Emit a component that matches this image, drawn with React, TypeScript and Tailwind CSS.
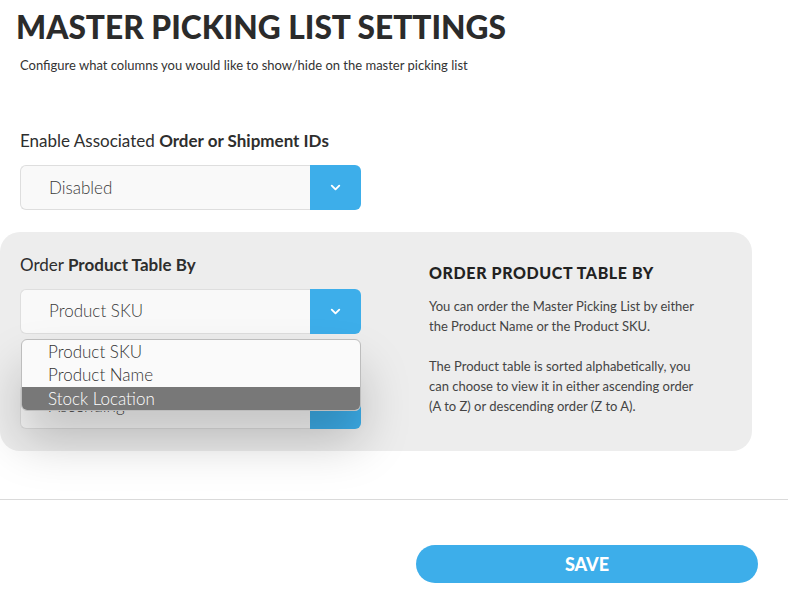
import React from 'react';
import { ChevronDown } from 'lucide-react';

const font = { fontFamily: 'Lato, "Liberation Sans", sans-serif' };

interface SelectProps {
  value: string;
}

// 青いボタン付きのセレクト
const SelectBox: React.FC<SelectProps> = ({ value }) => (
  <div className="flex h-[45px] w-[341px]">
    <div className="flex flex-1 items-center rounded-l-[6px] border border-r-0 border-[#dedede] bg-[#f9f9f9] pl-[28px] text-[17px] font-light text-[#3a3a3a]">
      {value}
    </div>
    <div className="flex w-[51px] items-center justify-center rounded-r-[6px] bg-[#3daeea]">
      <ChevronDown size={15} strokeWidth={3} className="text-white" />
    </div>
  </div>
);

const App: React.FC = () => {
  return (
    <div className="h-[605px] w-[788px] overflow-hidden bg-white text-[#2e2e2e]" style={font}>
      <div className="pl-[16px] pt-[5px]">
        <h1 className="text-[31.7px] leading-[44px] font-black text-[#2b2b2b]">
          MASTER PICKING LIST SETTINGS
        </h1>
        <p className="mt-[7px] pl-[4px] text-[13px] text-[#333]">
          Configure what columns you would like to show/hide on the master picking list
        </p>
      </div>

      <div className="mt-[52px] pl-[20px]">
        <div className="text-[17px] text-[#2e2e2e]">
          Enable Associated <span className="font-bold">Order or Shipment IDs</span>
        </div>
        <div className="mt-[12px]">
          <SelectBox value="Disabled" />
        </div>
      </div>

      <div className="mt-[22px] flex h-[219px] w-[752px] rounded-[20px] bg-[#ededed]">
        <div className="relative w-[409px] pl-[20px] pt-[20px]">
          <div className="text-[17px] text-[#2e2e2e]">
            Order <span className="font-bold">Product Table By</span>
          </div>
          <div className="mt-[11px]">
            <SelectBox value="Product SKU" />
          </div>
          <div className="mt-[50px]">
            <SelectBox value="Ascending" />
          </div>
          {/* 開いているドロップダウン */}
          <div className="absolute left-[21px] top-[107px] w-[340px] overflow-hidden rounded-[6px] border border-[#bdbdbd] bg-[#fafafa] shadow-[0_30px_50px_rgba(0,0,0,0.22)]">
            <div className="h-[23px] pl-[26px] text-[17px] leading-[23px] font-light text-[#333]">Product SKU</div>
            <div className="h-[24px] pl-[26px] text-[17px] leading-[24px] font-light text-[#333]">Product Name</div>
            <div className="h-[23px] bg-[#787878] pl-[26px] text-[17px] leading-[23px] font-light text-white">Stock Location</div>
          </div>
        </div>
        <div className="w-[292px] pt-[29px] pl-[20px]">
          <h2 className="text-[16px] font-black tracking-[0.6px] whitespace-nowrap text-[#222]">ORDER PRODUCT TABLE BY</h2>
          <p className="mt-[11px] text-[13px] leading-[20px] text-[#444]">
            You can order the Master Picking List by either the Product Name or the Product SKU.
          </p>
          <p className="mt-[20px] text-[13px] leading-[20px] text-[#444]">
            The Product table is sorted alphabetically, you can choose to view it in either ascending order (A to Z) or descending order (Z to A).
          </p>
        </div>
      </div>

      <div className="mt-[48px] h-px w-full bg-[#dadada]" />

      <div className="mt-[45px] flex justify-end pr-[30px]">
        <button className="h-[38px] w-[342px] rounded-full bg-[#3daeea] text-[18px] font-black text-white">
          SAVE
        </button>
      </div>
    </div>
  );
};

export default App;
